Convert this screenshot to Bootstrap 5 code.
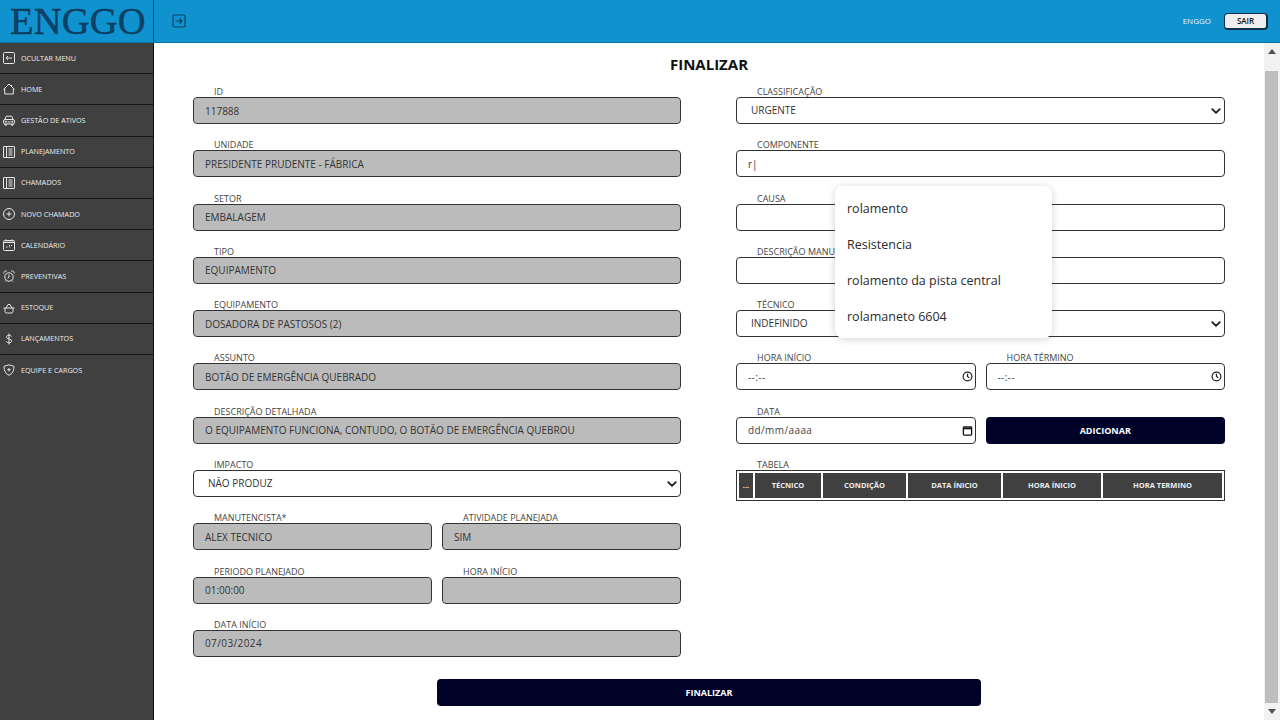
<!DOCTYPE html>
<html lang="pt-BR">
<head>
    <meta charset="UTF-8">
    <meta name="viewport" content="width=device-width, initial-scale=1.0">
    <title>Finalizar</title>
    <link href="https://cdn.jsdelivr.net/npm/bootstrap@5.3.0/dist/css/bootstrap.min.css" rel="stylesheet">
    <style>
        html, body {
            height: 100%;
            overflow: hidden;
        }

        body {
            font-family: "Open Sans", "Noto Sans", sans-serif;
            background-color: #fff;
            color: #222;
        }

        .topo {
            height: 43px;
            background-color: #1092ce;
            border-bottom: 1px solid #0d6f9e;
        }

        .logo-box {
            width: 154px;
            border-right: 1px solid #0b4a6c;
        }

        .logo-txt {
            font-family: "Liberation Serif", serif;
            font-size: 38.5px;
            line-height: 43px;
            letter-spacing: .2px;
            color: #0c4268;
            -webkit-text-stroke: .4px #0b3350;
            padding-left: 10px;
        }

        .abrir-menu {
            margin-left: 18px;
            color: #0c3f63;
        }

        .user-nome {
            font-size: 8px;
            color: #e0f6ff;
            margin-right: 13px;
        }

        .btn-sair {
            width: 44px;
            height: 17px;
            padding: 0;
            margin-right: 12px;
            font-size: 8px;
            font-weight: 600;
            line-height: 13px;
            color: #111;
            background-color: #eee;
            border: 1px solid #0c2f4a;
            border-width: 1px 2px 2px 1px;
            border-radius: 4px;
        }

        .corpo {
            height: 677px;
        }

        .menu-lat {
            width: 154px;
            background-color: #404040;
            border-right: 1px solid #111;
            border-radius: 0;
        }

        .menu-lat .list-group-item {
            height: 31.2px;
            padding: 0 0 0 3px;
            gap: 6px;
            font-size: 7.2px;
            color: #ececec;
            background-color: transparent;
            border: 0;
            border-bottom: 1px solid #161616;
            border-radius: 0;
        }

        .menu-lat .list-group-item:last-child {
            border-bottom: 0;
        }

        .menu-lat svg {
            width: 12px;
            height: 12px;
            flex: none;
            fill: none;
            stroke: #e6e6e6;
            stroke-width: 1;
        }

        .conteudo {
            padding: 0 39px;
        }

        .titulo {
            font-size: 15px;
            font-weight: 700;
            line-height: 20px;
            margin: 11px 0 12px;
            color: #111;
        }

        .colunas {
            gap: 55px;
        }

        .colunas > div {
            flex: 1 1 0;
            min-width: 0;
        }

        .colunas > div:first-child {
            flex: 0 0 488px;
        }

        .campo {
            position: relative;
            margin-bottom: 15.3px;
        }

        .campo .form-label {
            display: block;
            margin: 0 0 0 21px;
            font-size: 9px;
            line-height: 11px;
            color: #444;
        }

        .campo .form-control,
        .campo .form-select {
            height: 27px;
            min-height: 0;
            padding: 0 11px;
            font-size: 10px;
            color: #333;
            border: 1px solid #333;
            border-radius: 4px;
        }

        .campo .form-select {
            padding-left: 14px;
            background-image: url("data:image/svg+xml,%3csvg xmlns='http://www.w3.org/2000/svg' viewBox='0 0 16 16'%3e%3cpath fill='none' stroke='%23222' stroke-linecap='round' stroke-linejoin='round' stroke-width='3' d='m2 5 6 6 6-6'/%3e%3c/svg%3e");
            background-size: 10px 10px;
            background-position: right 3px center;
        }

        .campo .form-control:disabled {
            background-color: #bbb;
            opacity: 1;
        }

        .campo .form-control::placeholder {
            color: #444;
            opacity: 1;
            letter-spacing: .4px;
        }

        .campo .txt-data {
            letter-spacing: .4px;
        }

        .par {
            --bs-gutter-x: 10px;
        }

        .ico-input {
            position: absolute;
            right: 3px;
            bottom: 8px;
            width: 11px;
            height: 11px;
        }

        .btn-escuro {
            height: 27px;
            padding: 0;
            font-size: 9px;
            font-weight: 700;
            color: #fff;
            background-color: #010228;
            border: 0;
            border-radius: 4px;
        }

        .btn-add {
            margin-top: 11px;
        }

        .btn-final {
            width: 544px;
            margin-top: 7px;
        }

        .sugestoes {
            position: absolute;
            top: 186px;
            left: 835px;
            width: 217px;
            height: 152px;
            padding: 5px 0;
            background-color: #fff;
            border-radius: 8px;
            box-shadow: 0 1px 8px rgba(0, 0, 0, .18);
            z-index: 5;
        }

        .sugestoes .list-group-item {
            height: 36px;
            padding: 0 12px;
            font-size: 12.5px;
            line-height: 36px;
            color: #2b2b2b;
            border: 0;
            background: transparent;
        }

        .tab-itens {
            width: 100%;
            height: 31px;
            table-layout: fixed;
            border-collapse: separate;
            border-spacing: 2px;
            margin: 0;
            border: 1px solid #333;
        }

        .tab-itens th {
            padding: 0;
            font-size: 7.5px;
            font-weight: 700;
            text-align: center;
            color: #eee;
            background-color: #404040;
        }

        .tab-itens th:nth-child(1) { width: 14px; }
        .tab-itens th:nth-child(2) { width: 66px; }
        .tab-itens th:nth-child(3) { width: 83px; }
        .tab-itens th:nth-child(4) { width: 93px; }
        .tab-itens th:nth-child(5) { width: 98px; }

        .barra-rolagem {
            width: 16px;
            background-color: #f1f1f1;
        }

        .seta-rol {
            height: 17px;
            font-size: 0;
        }

        .seta-rol svg {
            width: 8px;
            height: 5px;
            fill: #505050;
        }

        .polegar {
            margin: 11px 2px 0 1px;
            height: 632px;
            background-color: #bdbdbd;
        }
    </style>
</head>
<body>
    <header class="topo d-flex align-items-center">
        <div class="logo-box h-100">
            <div class="logo-txt">ENGGO</div>
        </div>
        <svg class="abrir-menu" width="14" height="14" viewBox="0 0 14 14" fill="none" stroke="currentColor" stroke-width="1.1">
            <rect x="1" y="1" width="12" height="12" rx="1.5"/>
            <path d="M3.5 7h6.5M7.5 4.5 10 7 7.5 9.5"/>
        </svg>
        <span class="user-nome ms-auto">ENGGO</span>
        <button type="button" class="btn btn-sair">SAIR</button>
    </header>

    <div class="corpo d-flex">
        <nav class="menu-lat list-group flex-shrink-0">
            <a class="list-group-item d-flex align-items-center" href="#">
                <svg viewBox="0 0 12 12"><rect x=".5" y=".5" width="11" height="11" rx="1"/><path d="M9 6H3M5 4 3 6l2 2"/></svg>OCULTAR MENU
            </a>
            <a class="list-group-item d-flex align-items-center" href="#">
                <svg viewBox="0 0 12 12"><path d="M.5 6.500 6 1l5.500 5.500M1.700 5.500V11h8.600V5.500M8.500 2V3.500"/></svg>HOME
            </a>
            <a class="list-group-item d-flex align-items-center" href="#">
                <svg viewBox="0 0 12 12"><rect x=".5" y="5.500" width="11" height="4.500" rx="1.500"/><path d="M2 5.500 3.200 2.200h5.600L10 5.500M2 10v1.200h1.500V10M8.500 10v1.200H10V10M4.500 8h3"/><circle cx="2.800" cy="7.700" r=".7"/><circle cx="9.200" cy="7.700" r=".7"/></svg>GESTÃO DE ATIVOS
            </a>
            <a class="list-group-item d-flex align-items-center" href="#">
                <svg viewBox="0 0 12 12"><rect x=".5" y=".5" width="11" height="11" rx=".5"/><path d="M3.500.5v11M5.500 3h4M5.500 5h4M5.500 7h4M5.500 9h4"/></svg>PLANEJAMENTO
            </a>
            <a class="list-group-item d-flex align-items-center" href="#">
                <svg viewBox="0 0 12 12"><rect x=".5" y=".5" width="11" height="11" rx=".5"/><path d="M3.500.5v11M5.500 3h4M5.500 5h4M5.500 7h4M5.500 9h4"/></svg>CHAMADOS
            </a>
            <a class="list-group-item d-flex align-items-center" href="#">
                <svg viewBox="0 0 12 12"><circle cx="6" cy="6" r="5.500"/><path d="M6 3.500v5M3.500 6h5"/></svg>NOVO CHAMADO
            </a>
            <a class="list-group-item d-flex align-items-center" href="#">
                <svg viewBox="0 0 12 12"><rect x=".5" y="1.500" width="11" height="10" rx="1"/><path d="M.5 3.300h11M3 .5v1.500M9 .5v1.500M3 8h1.500M6 6.500h1M8 6.500h1M6 8h1" stroke-width="1.200"/></svg>CALENDÁRIO
            </a>
            <a class="list-group-item d-flex align-items-center" href="#">
                <svg viewBox="0 0 12 12"><circle cx="6" cy="7" r="4.200"/><path d="M6 4.500V7L4.700 8.500M.8 3.500a2.200 2.200 0 0 1 3-2.400M11.200 3.500a2.200 2.200 0 0 0-3-2.400M3 10.500l-.8 1M9 10.500l.8 1"/></svg>PREVENTIVAS
            </a>
            <a class="list-group-item d-flex align-items-center" href="#">
                <svg viewBox="0 0 12 12"><path d="M.5 6h11M2 6v3.500A1.500 1.500 0 0 0 3.500 11h5A1.500 1.500 0 0 0 10 9.500V6M3 6l2-3.500h2L9 6"/></svg>ESTOQUE
            </a>
            <a class="list-group-item d-flex align-items-center" href="#">
                <svg viewBox="0 0 12 12"><path d="M8.500 3.500C8 2.500 7 2.200 6 2.200c-1.500 0-2.500.8-2.500 1.900C3.500 6.700 8.700 5.200 8.700 8c0 1.100-1.200 1.800-2.700 1.800-1.200 0-2.300-.4-2.800-1.400M6 .5v11"/></svg>LANÇAMENTOS
            </a>
            <a class="list-group-item d-flex align-items-center" href="#">
                <svg viewBox="0 0 12 12"><path d="M6 .8 11 2.300c0 4.500-1.500 7.500-5 9-3.500-1.500-5-4.500-5-9zM6 4v3.500M4.300 5.700h3.400"/></svg>EQUIPE E CARGOS
            </a>
        </nav>

        <main class="conteudo flex-grow-1">
            <h1 class="titulo text-center">FINALIZAR</h1>
            <form class="colunas d-flex">
                <div>
                    <div class="campo"><label class="form-label">ID</label><input class="form-control" value="117888" disabled></div>
                    <div class="campo"><label class="form-label">UNIDADE</label><input class="form-control" value="PRESIDENTE PRUDENTE - FÁBRICA" disabled></div>
                    <div class="campo"><label class="form-label">SETOR</label><input class="form-control" value="EMBALAGEM" disabled></div>
                    <div class="campo"><label class="form-label">TIPO</label><input class="form-control" value="EQUIPAMENTO" disabled></div>
                    <div class="campo"><label class="form-label">EQUIPAMENTO</label><input class="form-control" value="DOSADORA DE PASTOSOS (2)" disabled></div>
                    <div class="campo"><label class="form-label">ASSUNTO</label><input class="form-control" value="BOTÃO DE EMERGÊNCIA QUEBRADO" disabled></div>
                    <div class="campo"><label class="form-label">DESCRIÇÃO DETALHADA</label><input class="form-control" value="O EQUIPAMENTO FUNCIONA, CONTUDO, O BOTÃO DE EMERGÊNCIA QUEBROU" disabled></div>
                    <div class="campo"><label class="form-label">IMPACTO</label><select class="form-select"><option>NÃO PRODUZ</option></select></div>
                    <div class="row par">
                        <div class="col-6"><div class="campo"><label class="form-label">MANUTENCISTA*</label><input class="form-control" value="ALEX TECNICO" disabled></div></div>
                        <div class="col-6"><div class="campo"><label class="form-label">ATIVIDADE PLANEJADA</label><input class="form-control" value="SIM" disabled></div></div>
                    </div>
                    <div class="row par">
                        <div class="col-6"><div class="campo"><label class="form-label">PERIODO PLANEJADO</label><input class="form-control" value="01:00:00" disabled></div></div>
                        <div class="col-6"><div class="campo"><label class="form-label">HORA INÍCIO</label><input class="form-control" disabled></div></div>
                    </div>
                    <div class="campo"><label class="form-label">DATA INÍCIO</label><input class="form-control txt-data" value="07/03/2024" disabled></div>
                </div>
                <div>
                    <div class="campo"><label class="form-label">CLASSIFICAÇÃO</label><select class="form-select"><option>URGENTE</option></select></div>
                    <div class="campo"><label class="form-label">COMPONENTE</label><input class="form-control" value="r|"></div>
                    <div class="campo"><label class="form-label">CAUSA</label><input class="form-control"></div>
                    <div class="campo"><label class="form-label">DESCRIÇÃO MANUTENÇÃO</label><input class="form-control"></div>
                    <div class="campo"><label class="form-label">TÉCNICO</label><select class="form-select"><option>INDEFINIDO</option></select></div>
                    <div class="row par">
                        <div class="col-6"><div class="campo"><label class="form-label">HORA INÍCIO</label><input class="form-control" placeholder="--:--">
                            <svg class="ico-input" viewBox="0 0 12 12" fill="none" stroke="#222" stroke-width="1.300"><circle cx="6" cy="6" r="4.800"/><path d="M6 3v3l2 1.500"/></svg></div></div>
                        <div class="col-6"><div class="campo"><label class="form-label">HORA TÉRMINO</label><input class="form-control" placeholder="--:--">
                            <svg class="ico-input" viewBox="0 0 12 12" fill="none" stroke="#222" stroke-width="1.300"><circle cx="6" cy="6" r="4.800"/><path d="M6 3v3l2 1.500"/></svg></div></div>
                    </div>
                    <div class="row par">
                        <div class="col-6"><div class="campo"><label class="form-label">DATA</label><input class="form-control" placeholder="dd/mm/aaaa">
                            <svg class="ico-input" viewBox="0 0 12 12" fill="none" stroke="#111" stroke-width="1.400"><rect x="1.500" y="2" width="9" height="9" rx=".8"/><path d="M1.500 3.700h9" stroke-width="2"/></svg></div></div>
                        <div class="col-6"><button type="button" class="btn btn-escuro btn-add w-100">ADICIONAR</button></div>
                    </div>
                    <div class="campo">
                        <label class="form-label">TABELA</label>
                        <table class="tab-itens">
                            <thead><tr><th>...</th><th>TÉCNICO</th><th>CONDIÇÃO</th><th>DATA ÍNICIO</th><th>HORA ÍNICIO</th><th>HORA TERMINO</th></tr></thead>
                        </table>
                    </div>
                </div>
            </form>
            <div class="text-center">
                <button type="button" class="btn btn-escuro btn-final">FINALIZAR</button>
            </div>
        </main>

        <div class="barra-rolagem d-flex flex-column flex-shrink-0">
            <div class="seta-rol d-flex align-items-center justify-content-center"><svg viewBox="0 0 8 5"><path d="M4 0 8 5H0z"/></svg></div>
            <div class="polegar"></div>
            <div class="seta-rol d-flex align-items-center justify-content-center mt-auto"><svg viewBox="0 0 8 5"><path d="M0 0h8L4 5z"/></svg></div>
        </div>
    </div>

    <div class="sugestoes list-group">
        <a class="list-group-item" href="#">rolamento</a>
        <a class="list-group-item" href="#">Resistencia</a>
        <a class="list-group-item" href="#">rolamento da pista central</a>
        <a class="list-group-item" href="#">rolamaneto 6604</a>
    </div>

    <script src="https://cdn.jsdelivr.net/npm/bootstrap@5.3.0/dist/js/bootstrap.bundle.min.js"></script>
</body>
</html>
